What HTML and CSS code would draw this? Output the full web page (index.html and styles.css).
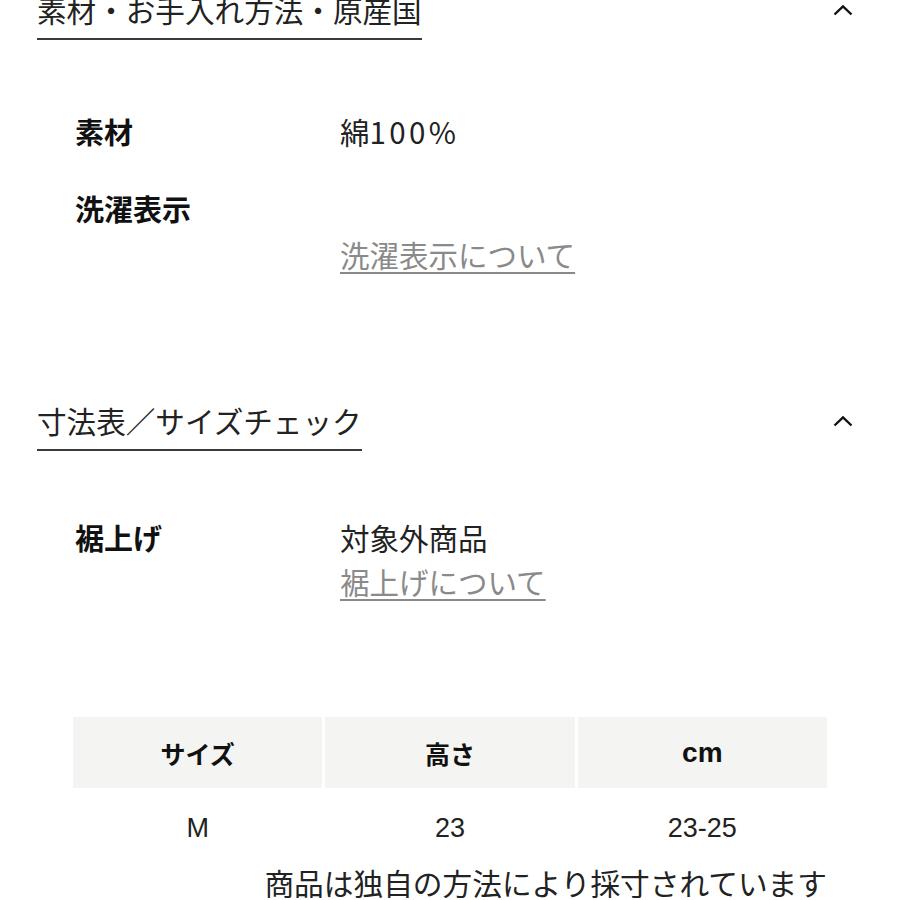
FILE: index.html
```html
<!DOCTYPE html>
<html lang="ja">
<head>
<meta charset="utf-8">
<title>素材・寸法</title>
<link rel="stylesheet" href="styles.css">
</head>
<body>
<div class="page">
  <section class="section section-first">
    <div class="section-head">
      <h2 class="section-title">素材・お手入れ方法・原産国</h2>
      <svg class="chevron" width="20" height="12" viewBox="0 0 20 12"><polyline points="1.5,10.5 10,2.5 18.5,10.5" fill="none" stroke="#111" stroke-width="2.4"/></svg>
    </div>
    <div class="spec-list spec-list-first">
      <div class="spec-row">
        <div class="spec-label">素材</div>
        <div class="spec-value">綿<span class="num">100%</span></div>
      </div>
      <div class="spec-row spec-row-wash">
        <div class="spec-label">洗濯表示</div>
        <div class="spec-value">
          <div class="wash-icons"></div>
          <a class="spec-link" href="#">洗濯表示について</a>
        </div>
      </div>
    </div>
  </section>

  <section class="section section-second">
    <div class="section-head">
      <h2 class="section-title">寸法表／サイズチェック</h2>
      <svg class="chevron" width="20" height="12" viewBox="0 0 20 12"><polyline points="1.5,10.5 10,2.5 18.5,10.5" fill="none" stroke="#111" stroke-width="2.4"/></svg>
    </div>
    <div class="spec-list spec-list-second">
      <div class="spec-row">
        <div class="spec-label">裾上げ</div>
        <div class="spec-value">
          <div>対象外商品</div>
          <a class="spec-link" href="#">裾上げについて</a>
        </div>
      </div>
    </div>

    <div class="size-table">
      <div class="size-head">
        <div class="size-cell">サイズ</div>
        <div class="size-cell">高さ</div>
        <div class="size-cell size-cell-latin">cm</div>
      </div>
      <div class="size-data">
        <div class="size-cell">M</div>
        <div class="size-cell">23</div>
        <div class="size-cell">23-25</div>
      </div>
    </div>
    <p class="size-note">商品は独自の方法により採寸されています</p>
  </section>
</div>
</body>
</html>
```

FILE: styles.css
```css
* { box-sizing: border-box; }

html, body {
  margin: 0;
  padding: 0;
  background: #ffffff;
}

body {
  font-family: "Noto Sans CJK JP", "Noto Sans", sans-serif;
  color: #222222;
  overflow: hidden;
}

.page {
  padding: 0 47px 0 37px;
}

.section-first {
  margin-top: -5px;
}

.section-second {
  margin-top: 130px;
}

.section-head {
  display: flex;
  justify-content: space-between;
  align-items: center;
}

.section-title {
  margin: 0;
  font-size: 29.6px;
  line-height: 29px;
  font-weight: 400;
  color: #222;
  padding-bottom: 14px;
  border-bottom: 2px solid #3a3a3a;
}

.chevron {
  display: block;
  margin-bottom: 16px;
}

.spec-list {
  padding-left: 38px;
}

.spec-list-first {
  margin-top: 69px;
}

.spec-list-second {
  margin-top: 64px;
}

.spec-row {
  display: flex;
  line-height: 44px;
}

.spec-row-wash {
  margin-top: 33px;
}

.spec-label {
  width: 265px;
  flex-shrink: 0;
  font-size: 29px;
  font-weight: 700;
  color: #111;
}

.spec-value {
  font-size: 29.5px;
  color: #222;
}

.num {
  letter-spacing: 3.4px;
}

.wash-icons {
  height: 46px;
}

.spec-link {
  display: block;
  color: #8a8a8a;
  text-decoration: underline;
  text-decoration-color: #8a8a8a;
  text-underline-offset: 5px;
  text-decoration-thickness: 2px;
}

.size-table {
  margin: 114px 0 0 36px;
  width: 754px;
  font-family: "Liberation Sans", "Noto Sans CJK JP", sans-serif;
}

.size-head,
.size-data {
  display: grid;
  grid-template-columns: 1fr 1fr 1fr;
  column-gap: 3px;
}

.size-head .size-cell {
  background: #f4f4f2;
  height: 71px;
  font-weight: 700;
  font-size: 25px;
  color: #111;
}

.size-head .size-cell-latin {
  font-size: 28px;
}

.size-cell {
  display: flex;
  align-items: center;
  justify-content: center;
}

.size-data .size-cell {
  height: 80px;
  font-size: 27px;
  color: #222;
}

.size-note {
  margin: 0;
  width: 790px;
  text-align: right;
  font-size: 29.7px;
  line-height: 30px;
  color: #222;
}
```
